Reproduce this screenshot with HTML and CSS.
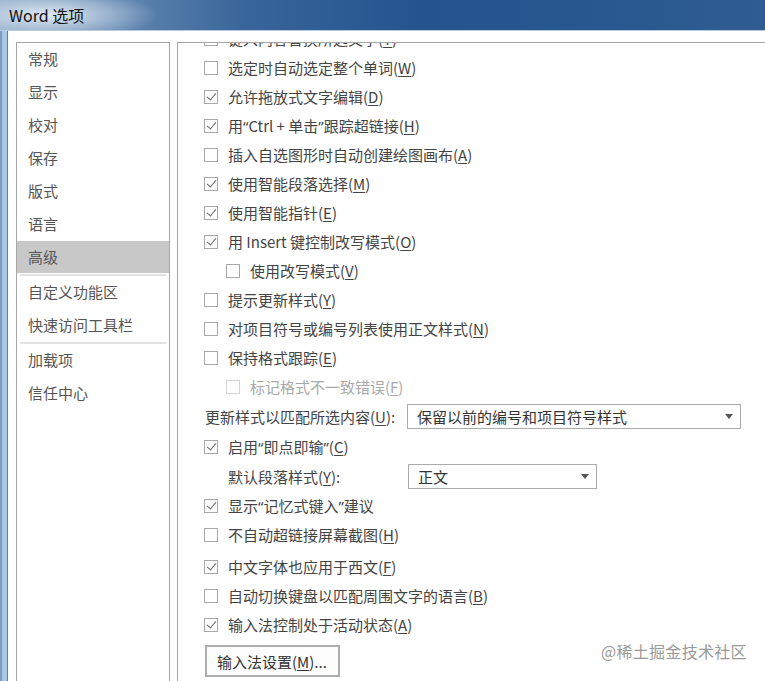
FILE: index.html
```html
<!DOCTYPE html>
<html lang="zh-CN">
<head>
<meta charset="utf-8">
<title>Word 选项</title>
<link rel="stylesheet" href="styles.css">
</head>
<body>
<div class="window">
  <div class="titlebar"><span class="title">Word 选项</span></div>
  <div class="frame">
    <div class="frame-left"></div>
    <div class="client">
      <nav class="nav">
        <div class="nav-item">常规</div>
        <div class="nav-item">显示</div>
        <div class="nav-item">校对</div>
        <div class="nav-item">保存</div>
        <div class="nav-item">版式</div>
        <div class="nav-item">语言</div>
        <div class="nav-item selected">高级</div>
        <div class="nav-sep"></div>
        <div class="nav-item">自定义功能区</div>
        <div class="nav-item">快速访问工具栏</div>
        <div class="nav-sep"></div>
        <div class="nav-item">加载项</div>
        <div class="nav-item">信任中心</div>
      </nav>
      <div class="content">
        <div class="inner">
          <div class="row"><span class="cb checked"></span><span>键入内容替换所选文字(<u>T</u>)</span></div>
          <div class="row"><span class="cb"></span><span>选定时自动选定整个单词(<u>W</u>)</span></div>
          <div class="row"><span class="cb checked"></span><span>允许拖放式文字编辑(<u>D</u>)</span></div>
          <div class="row"><span class="cb checked"></span><span>用<span class="q">“</span>Ctrl + 单击<span class="q">”</span>跟踪超链接(<u>H</u>)</span></div>
          <div class="row"><span class="cb"></span><span>插入自选图形时自动创建绘图画布(<u>A</u>)</span></div>
          <div class="row"><span class="cb checked"></span><span>使用智能段落选择(<u>M</u>)</span></div>
          <div class="row"><span class="cb checked"></span><span>使用智能指针(<u>E</u>)</span></div>
          <div class="row"><span class="cb checked"></span><span>用 Insert 键控制改写模式(<u>O</u>)</span></div>
          <div class="row indent"><span class="cb"></span><span>使用改写模式(<u>V</u>)</span></div>
          <div class="row"><span class="cb"></span><span>提示更新样式(<u>Y</u>)</span></div>
          <div class="row"><span class="cb"></span><span>对项目符号或编号列表使用正文样式(<u>N</u>)</span></div>
          <div class="row"><span class="cb"></span><span>保持格式跟踪(<u>E</u>)</span></div>
          <div class="row indent disabled"><span class="cb"></span><span>标记格式不一致错误(<u>F</u>)</span></div>
          <div class="row select-row first">
            <span class="label">更新样式以匹配所选内容(<u>U</u>):</span>
            <div class="select wide"><span>保留以前的编号和项目符号样式</span><span class="arrow"></span></div>
          </div>
          <div class="row"><span class="cb checked"></span><span>启用<span class="q">“</span>即点即输<span class="q">”</span>(<u>C</u>)</span></div>
          <div class="row select-row second">
            <span class="label">默认段落样式(<u>Y</u>):</span>
            <div class="select narrow"><span>正文</span><span class="arrow"></span></div>
          </div>
          <div class="row"><span class="cb checked"></span><span>显示<span class="q">“</span>记忆式键入<span class="q">”</span>建议</span></div>
          <div class="row"><span class="cb"></span><span>不自动超链接屏幕截图(<u>H</u>)</span></div>
          <div class="row group"><span class="cb checked"></span><span>中文字体也应用于西文(<u>F</u>)</span></div>
          <div class="row"><span class="cb"></span><span>自动切换键盘以匹配周围文字的语言(<u>B</u>)</span></div>
          <div class="row"><span class="cb checked"></span><span>输入法控制处于活动状态(<u>A</u>)</span></div>
          <div class="btn-row"><button class="btn">输入法设置(<u>M</u>)...</button></div>
        </div>
      </div>
    </div>
  </div>
  <div class="watermark">@稀土掘金技术社区</div>
</div>
</body>
</html>
```
FILE: styles.css
```css
* { box-sizing: border-box; }
html, body {
  margin: 0;
  padding: 0;
  width: 765px;
  height: 681px;
  overflow: hidden;
  background: #ffffff;
}
body {
  font-family: "Noto Sans CJK SC", "Noto Sans", sans-serif;
  font-size: 15px;
  color: #444;
}
.window {
  position: relative;
  width: 765px;
  height: 681px;
  display: flex;
  flex-direction: column;
}
.titlebar {
  height: 31px;
  flex: none;
  display: flex;
  align-items: center;
  padding-left: 9px;
  background:
    radial-gradient(ellipse 110px 26px at 48px 15px, rgba(235,242,250,0.9), rgba(200,215,232,0.55) 55%, rgba(200,215,232,0) 100%),
    linear-gradient(to right, #8fa9c6 0%, #6a8db4 12%, #38659a 32%, #24538e 55%, #28588f 80%, #2f5c93 100%);
  border-bottom: 1px solid #b9cbe0;
}
.title {
  font-size: 16px;
  color: #111;
  line-height: 1;
  margin-top: -1px;
}
.frame {
  flex: 1;
  display: flex;
  min-height: 0;
}
.frame-left {
  width: 8px;
  flex: none;
  background: linear-gradient(to right, #7d9dc0 0, #7d9dc0 2px, #a9c6e4 2px, #a9c6e4 7px, #6c7a8a 7px);
}
.client {
  flex: 1;
  display: flex;
  gap: 7px;
  padding: 11px 0 0 8px;
  background: #fff;
  min-width: 0;
}
.nav {
  width: 154px;
  flex: none;
  border: 1px solid #a6a6a6;
  border-bottom: none;
  color: #555;
}
.nav-item {
  height: 33px;
  line-height: 31px;
  padding-left: 11px;
  padding-bottom: 2px;
}
.nav-item.selected {
  background: #c8c8c8;
  height: 32px;
  line-height: 32px;
  padding-bottom: 0;
  margin-bottom: 1px;
}
.nav-sep {
  height: 2px;
  margin: 0 3px;
  background: #e2e2e2;
}
.content {
  flex: 1;
  border-left: 1px solid #a6a6a6;
  border-top: 1px solid #a6a6a6;
  overflow: hidden;
  min-width: 0;
}
.inner {
  margin-top: -19px;
}
.row {
  height: 29px;
  display: flex;
  align-items: center;
  padding-left: 26px;
  white-space: nowrap;
}
.q { font-family: "Noto Sans", sans-serif; }
.row.indent { padding-left: 48px; }
.row.disabled { color: #a9a9a9; }
.row.group { margin-top: 3px; }
u { text-decoration: underline; text-underline-offset: 2px; }
.cb {
  width: 14px;
  height: 14px;
  flex: none;
  border: 1px solid #a8a8a8;
  background: #fff;
  margin-right: 10px;
  position: relative;
}
.disabled .cb { border-color: #d4d4d4; }
.cb.checked::after {
  content: "";
  position: absolute;
  left: 4px;
  top: 0px;
  width: 4px;
  height: 8px;
  border-right: 1.3px solid #666;
  border-bottom: 1.3px solid #666;
  transform: rotate(40deg);
}
.select-row.first {
  height: 31px;
  padding-left: 27px;
}
.select-row.second {
  height: 30px;
  padding-left: 50px;
}
.select-row .label {
  flex: none;
}
.select-row.first .label { width: 202px; }
.select-row.second .label { width: 180px; }
.select {
  height: 25px;
  border: 1px solid #ababab;
  background: #fff;
  display: flex;
  align-items: center;
  justify-content: space-between;
  padding: 0 7px 0 9px;
  color: #333;
}
.select.wide { width: 334px; }
.select.narrow { width: 189px; }
.arrow {
  width: 0;
  height: 0;
  border-left: 4px solid transparent;
  border-right: 4px solid transparent;
  border-top: 5px solid #555;
}
.btn-row {
  padding-left: 27px;
  margin-top: 6px;
}
.btn {
  font-family: inherit;
  font-size: 15px;
  color: #333;
  width: 135px;
  height: 32px;
  border: 2px solid #adadad;
  background: #fdfdfd;
  text-align: left;
  padding: 0 0 0 10px;
}
.watermark {
  position: absolute;
  left: 601px;
  top: 639px;
  font-size: 16px;
  color: #9a9a9a;
  letter-spacing: 0.3px;
}
```
